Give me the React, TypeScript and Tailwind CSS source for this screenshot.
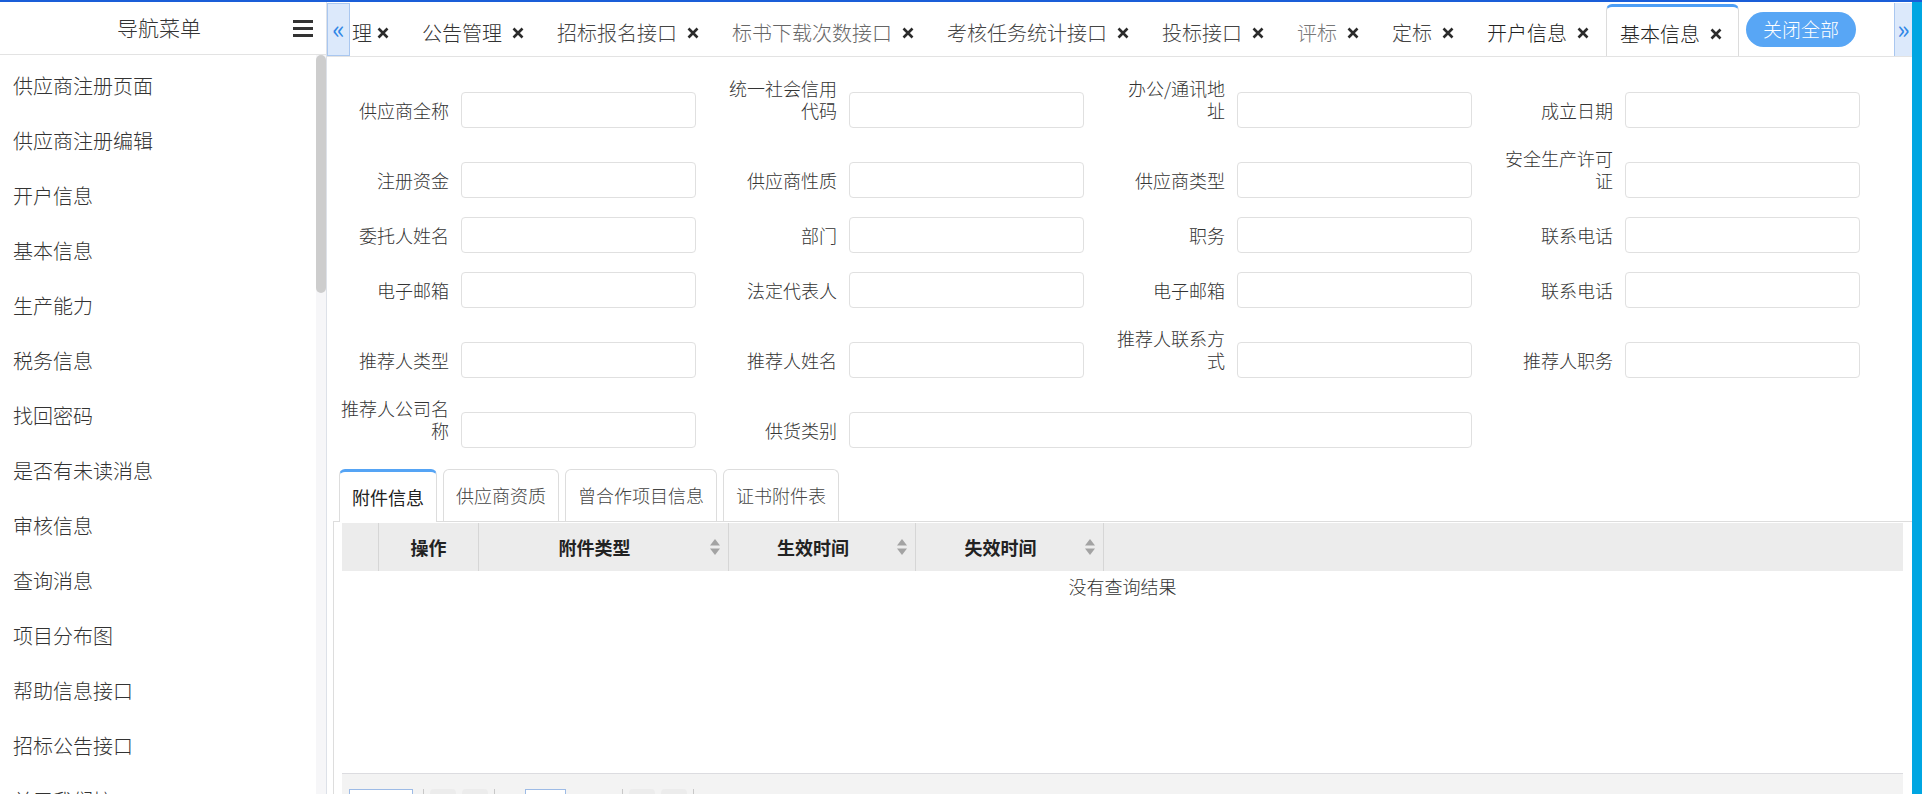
import React from 'react';

const FONT = "font-['Noto_Sans_CJK_SC','Noto_Sans',sans-serif]";

const menuItems = [
  '供应商注册页面',
  '供应商注册编辑',
  '开户信息',
  '基本信息',
  '生产能力',
  '税务信息',
  '找回密码',
  '是否有未读消息',
  '审核信息',
  '查询消息',
  '项目分布图',
  '帮助信息接口',
  '招标公告接口',
  '关于我们接口',
];

const tabs = [
  { title: '公告管理', color: 'text-[#333]' },
  { title: '招标报名接口', color: 'text-[#444]' },
  { title: '标书下载次数接口', color: 'text-[#666]' },
  { title: '考核任务统计接口', color: 'text-[#444]' },
  { title: '投标接口', color: 'text-[#444]' },
  { title: '评标', color: 'text-[#777]' },
  { title: '定标', color: 'text-[#444]' },
  { title: '开户信息', color: 'text-[#222]' },
];

// each row: [label, wide?]
const formRows: { label: string; wide?: boolean }[][] = [
  [{ label: '供应商全称' }, { label: '统一社会信用代码' }, { label: '办公/通讯地址' }, { label: '成立日期' }],
  [{ label: '注册资金' }, { label: '供应商性质' }, { label: '供应商类型' }, { label: '安全生产许可证' }],
  [{ label: '委托人姓名' }, { label: '部门' }, { label: '职务' }, { label: '联系电话' }],
  [{ label: '电子邮箱' }, { label: '法定代表人' }, { label: '电子邮箱' }, { label: '联系电话' }],
  [{ label: '推荐人类型' }, { label: '推荐人姓名' }, { label: '推荐人联系方式' }, { label: '推荐人职务' }],
  [{ label: '推荐人公司名称' }, { label: '供货类别', wide: true }],
];

const subTabs = ['附件信息', '供应商资质', '曾合作项目信息', '证书附件表'];

function SortIcon() {
  return (
    <svg width="10" height="16" viewBox="0 0 10 16" className="shrink-0">
      <path d="M5 0 L10 6.5 L0 6.5 Z" fill="#a3a3a3" />
      <path d="M5 16 L10 9.5 L0 9.5 Z" fill="#a3a3a3" />
    </svg>
  );
}

function TabClose({ first }: { first?: boolean }) {
  return (
    <svg
      width="12"
      height="12"
      viewBox="0 0 12 12"
      className={`shrink-0 ${first ? 'ml-[5px]' : 'ml-[10px]'}`}
    >
      <path d="M1.5 1.5 L10.5 10.5 M10.5 1.5 L1.5 10.5" stroke="#2b2b2b" strokeWidth="2.6" strokeLinecap="butt" />
    </svg>
  );
}

export default function App() {
  return (
    <div className={`h-[794px] w-full overflow-hidden flex flex-col bg-white font-light ${FONT}`}>
      <div className="h-[2px] bg-[#1a5ed8] shrink-0" />
      <div className="flex flex-1 min-h-0">
        {/* sidebar */}
        <aside className="w-[327px] shrink-0 flex flex-col border-r border-[#dde1e8]">
          <div className="h-[53px] shrink-0 flex items-center pl-[117px] pr-[13px] border-b border-[#e3e3e3]">
            <span className="text-[21px] text-[#333]">导航菜单</span>
            <div className="ml-auto flex flex-col gap-[4px]">
              <span className="block h-[3px] w-[20px] bg-[#333]" />
              <span className="block h-[3px] w-[20px] bg-[#333]" />
              <span className="block h-[3px] w-[20px] bg-[#333]" />
            </div>
          </div>
          <div className="flex flex-1 min-h-0">
            <ul className="w-[316px] pt-[3px] overflow-hidden">
              {menuItems.map((item) => (
                <li key={item} className="h-[55px] flex items-center pl-[13px] text-[20px] text-[#333]">
                  {item}
                </li>
              ))}
            </ul>
            <div className="w-[10px] bg-[#f6f6f8]">
              <div className="h-[238px] w-[10px] rounded-[5px] bg-[#cdcdcd]" />
            </div>
          </div>
        </aside>

        {/* main */}
        <main className="flex-1 min-w-0 flex flex-col overflow-hidden">
          {/* tab bar */}
          <div className="h-[55px] shrink-0 flex items-stretch border-b border-[#e3e3e3]">
            <div className="mt-[1px] w-[23px] shrink-0 flex items-center justify-center bg-[#dce9fb] border border-[#a9c7f0] text-[#2f86e6] text-[26px] font-normal leading-none pb-[3px]">
              «
            </div>
            <div className="flex-1 min-w-0 flex items-end overflow-hidden">
              <div className="h-[52px] shrink-0 flex items-center pt-[5px] pl-[2px] pr-[17px] text-[20px] text-[#333]">
                <span>理</span>
                <TabClose first />
              </div>
              {tabs.map((t) => (
                <div
                  key={t.title}
                  className={`h-[52px] shrink-0 flex items-center pt-[5px] pl-[16px] pr-[17px] text-[20px] whitespace-nowrap ${t.color}`}
                >
                  <span>{t.title}</span>
                  <TabClose />
                </div>
              ))}
              <div className="h-[53px] -mb-[1px] shrink-0 flex items-center pt-[3px] pl-[13px] pr-[16px] text-[20px] text-[#222] bg-white border-t-[3px] border-t-[#4d9ef5] border-x border-x-[#dcdcdc] rounded-t-[6px] whitespace-nowrap">
                <span>基本信息</span>
                <TabClose />
              </div>
            </div>
            <div className="self-center ml-[6px] mr-[38px] w-[110px] h-[35px] shrink-0 rounded-full bg-[#58a6f5] text-white text-[19px] flex items-center justify-center">
              关闭全部
            </div>
            <div className="mt-[1px] w-[18px] shrink-0 flex items-center justify-center bg-[#dce9fb] border-l border-[#a9c7f0] text-[#2f86e6] text-[26px] font-normal leading-none pb-[3px]">
              »
            </div>
          </div>

          {/* form */}
          <div className="pl-[12px] pt-[20px] grid grid-cols-[repeat(4,388px)] gap-y-[19px] shrink-0">
            {formRows.map((row, ri) =>
              row.map((f, ci) => (
                <div key={`${ri}-${ci}`} className={`flex items-end ${f.wide ? 'col-span-2' : ''}`}>
                  <label className="w-[110px] shrink-0 text-right text-[18px] leading-[22px] pb-[7px] text-[#333] break-all">
                    {f.label}
                  </label>
                  <input
                    type="text"
                    className={`ml-[12px] h-[36px] ${f.wide ? 'w-[623px]' : 'w-[235px]'} rounded-[4px] border border-[#e0e0e0] bg-white outline-none`}
                  />
                </div>
              ))
            )}
          </div>

          {/* sub tabs */}
          <div className="mt-[21px] ml-[6px] shrink-0 flex items-end gap-[6px] pl-[6px] border-b border-[#dddddd] h-[53px]">
            {subTabs.map((t, i) =>
              i === 0 ? (
                <div
                  key={t}
                  className="h-[53px] -mb-[1px] px-[12px] flex items-center bg-white border-t-[3px] border-t-[#55a4f5] border-x border-x-[#dddddd] rounded-t-[6px] text-[18px] text-[#222] font-normal"
                >
                  {t}
                </div>
              ) : (
                <div
                  key={t}
                  className="h-[52px] px-[12px] flex items-center border-t border-x border-[#dddddd] rounded-t-[6px] text-[18px] text-[#444]"
                >
                  {t}
                </div>
              )
            )}
          </div>

          {/* grid panel */}
          <div className="ml-[6px] border-l border-[#dddddd] pl-[8px] pr-[9px] flex-1 min-h-0">
            <div className="h-[48px] mt-[1px] flex bg-[#ececec] text-[18px] font-bold text-[#222]">
              <div className="w-[37px] border-r border-[#d6d6d6]" />
              <div className="w-[100px] border-r border-[#d6d6d6] flex items-center justify-center">操作</div>
              <div className="w-[250px] border-r border-[#d6d6d6] flex items-center pr-[8px]">
                <span className="flex-1 text-center">附件类型</span>
                <SortIcon />
              </div>
              <div className="w-[187px] border-r border-[#d6d6d6] flex items-center pr-[8px]">
                <span className="flex-1 text-center">生效时间</span>
                <SortIcon />
              </div>
              <div className="w-[188px] border-r border-[#d6d6d6] flex items-center pr-[8px]">
                <span className="flex-1 text-center">失效时间</span>
                <SortIcon />
              </div>
              <div className="flex-1" />
            </div>
            <div className="h-[202px] bg-white">
              <div className="h-[30px] flex items-center justify-center text-[18px] text-[#333]">没有查询结果</div>
            </div>
            <div className="h-[40px] border-t border-[#dcdce0] bg-[#f3f3f3] pt-[15px] pl-[7px] flex items-start gap-[6px]">
              <div className="h-[24px] w-[64px] border border-[#9dbbe6] bg-white" />
              <div className="h-[24px] w-[1px] ml-[4px] bg-[#c8c8c8]" />
              <div className="h-[24px] w-[26px] rounded-[4px] bg-[#ececec]" />
              <div className="h-[24px] w-[26px] rounded-[4px] bg-[#ececec]" />
              <div className="h-[24px] w-[1px] bg-[#c8c8c8]" />
              <div className="h-[24px] w-[41px] ml-[24px] border border-[#9dbbe6] bg-white" />
              <div className="h-[24px] w-[1px] ml-[50px] bg-[#c8c8c8]" />
              <div className="h-[24px] w-[26px] rounded-[4px] bg-[#ececec]" />
              <div className="h-[24px] w-[26px] rounded-[4px] bg-[#ececec]" />
              <div className="h-[24px] w-[1px] bg-[#c8c8c8]" />
            </div>
          </div>
        </main>

        <div className="w-[10px] shrink-0 bg-[#00a6e2]" />
      </div>
    </div>
  );
}
